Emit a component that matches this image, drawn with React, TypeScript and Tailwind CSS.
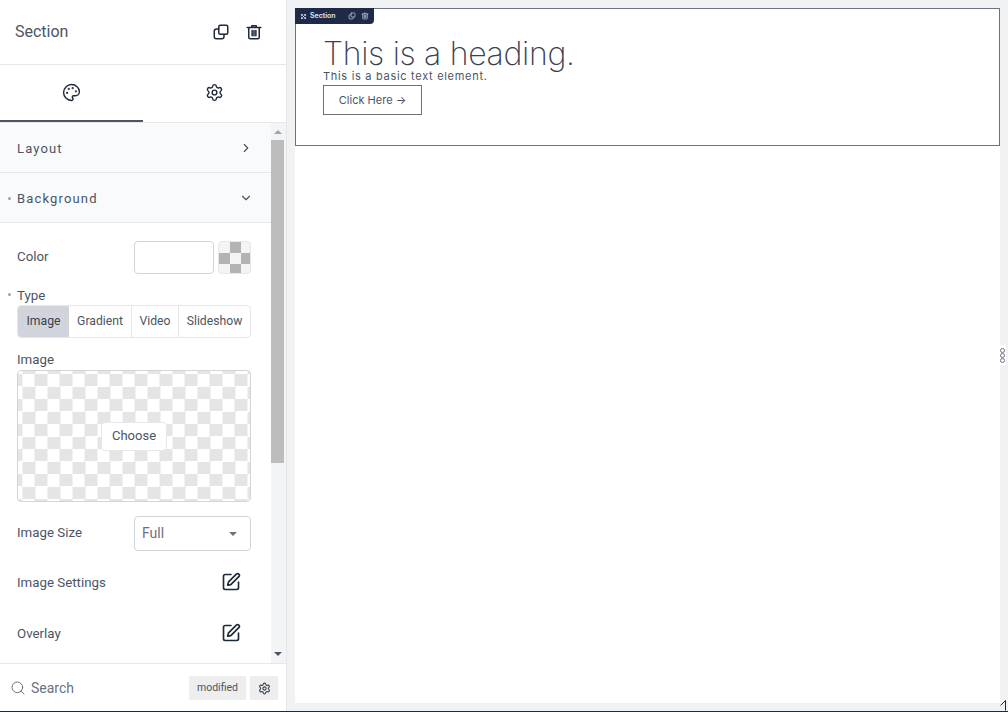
import React from 'react';
import { ChevronDown, ChevronRight, Move, Palette, Search, Settings, SquarePen } from 'lucide-react';

const panelFont = { fontFamily: 'Roboto, "Liberation Sans", sans-serif' };
const previewFont = { fontFamily: 'Inter, sans-serif' };

function CopyIcon({ className }: { className: string }) {
  return (
    <svg viewBox="0 0 24 24" fill="none" stroke="currentColor" strokeWidth="2" strokeLinecap="round" strokeLinejoin="round" className={className}>
      <rect x="9" y="3" width="12" height="12" rx="2" />
      <path d="M9 8H6a3 3 0 0 0-3 3v7a3 3 0 0 0 3 3h7a3 3 0 0 0 3-3v-3" />
    </svg>
  );
}

function TrashIcon({ className }: { className: string }) {
  return (
    <svg viewBox="0 0 24 24" fill="none" stroke="currentColor" strokeWidth="2" strokeLinecap="round" strokeLinejoin="round" className={className}>
      <path d="M3 6h18M9 5V3.5h6V5M5 6v13a2 2 0 0 0 2 2h10a2 2 0 0 0 2-2V6" />
      <path d="M9.5 10v7M12 10v7M14.5 10v7" />
    </svg>
  );
}

function AccordionRow({ label, open, dot }: { label: string; open?: boolean; dot?: boolean }) {
  return (
    <div className="relative h-[50px] flex items-center justify-between pl-[17px] pr-[18px] bg-[#f9fafb] border-b border-[#e5e7eb] text-[13px] tracking-[1.15px] text-[#4b5563]">
      {dot && <span className="absolute left-[8px] top-[24px] w-[3px] h-[3px] rounded-full bg-[#9ca3af]" />}
      <span className="pt-[2px]">{label}</span>
      {open ? <ChevronDown size={14} className="text-[#4b5563]" /> : <ChevronRight size={14} className="text-[#4b5563]" />}
    </div>
  );
}

function Sidebar() {
  return (
    <div style={panelFont} className="w-[287px] h-full shrink-0 flex flex-col bg-white border-r border-[#e5e7eb]">
      <div className="h-[65px] shrink-0 flex items-center justify-between pl-[15px] pr-[23px] border-b border-[#e5e7eb]">
        <span className="text-[16px] text-[#4b5563]">Section</span>
        <div className="flex items-center gap-[15px] text-[#1f2937]">
          <CopyIcon className="w-[18px] h-[18px]" />
          <TrashIcon className="w-[18px] h-[18px]" />
        </div>
      </div>
      <div className="h-[57px] shrink-0 flex">
        <div className="w-[143px] flex items-center justify-center border-b-2 border-[#4b5563] text-[#1f2937]">
          <Palette size={19} strokeWidth={1.8} />
        </div>
        <div className="flex-1 flex items-center justify-center pb-[2px] text-[#1f2937]">
          <Settings size={19} strokeWidth={1.8} />
        </div>
      </div>
      <div className="flex-1 min-h-0 flex border-t border-[#e5e7eb]">
        <div className="flex-1 min-w-0 overflow-hidden">
          <AccordionRow label="Layout" />
          <AccordionRow label="Background" open dot />
          <div className="pl-[17px] pr-[20px] text-[13.3px] text-[#4b5563]">
            <div className="mt-[18px] flex items-center justify-between">
              <span className="pb-[2px]">Color</span>
              <div className="flex gap-[4px]">
                <div className="w-[80px] h-[33px] rounded-[4px] border border-[#d1d5db] bg-white" />
                <div className="w-[33px] h-[33px] rounded-[4px] border border-[#e5e7eb] bg-[conic-gradient(#b3b3b3_25%,#f3f4f6_0_50%,#b3b3b3_0_75%,#f3f4f6_0)] bg-[length:22px_22px] bg-[position:0_0]" />
              </div>
            </div>
            <div className="relative mt-[13px] h-[18px] leading-[18px]">
              <span className="absolute left-[-9px] top-[6px] w-[3px] h-[3px] rounded-full bg-[#9ca3af]" />
              Type
            </div>
            <div className="h-[33px] flex rounded-[4px] border border-[#e5e7eb] overflow-hidden text-[12.2px] text-[#4b5563]">
              <div className="w-[51px] flex items-center justify-center bg-[#d1d5db] text-[#374151]">Image</div>
              <div className="w-[63px] flex items-center justify-center border-r border-[#e5e7eb]">Gradient</div>
              <div className="w-[47px] flex items-center justify-center border-r border-[#e5e7eb]">Video</div>
              <div className="flex-1 flex items-center justify-center">Slideshow</div>
            </div>
            <div className="mt-[13px] h-[18px] leading-[18px]">Image</div>
            <div className="mt-[1px] h-[132px] rounded-[4px] border border-[#d1d5db] flex items-center justify-center bg-[conic-gradient(#e5e5e5_25%,#ffffff_0_50%,#e5e5e5_0_75%,#ffffff_0)] bg-[length:25px_25px] bg-[position:4.5px_3px]">
              <div className="w-[66px] h-[29px] flex items-center justify-center rounded-[4px] border border-[#e5e7eb] bg-white text-[13px] text-[#4b5563]">Choose</div>
            </div>
            <div className="mt-[14px] flex items-center justify-between">
              <span className="pb-[2px]">Image Size</span>
              <div className="w-[117px] h-[35px] flex items-center justify-between pl-[7px] pr-[13px] rounded-[4px] border border-[#d1d5db] text-[14px] text-[#6b7280]">
                Full
                <span className="w-0 h-0 border-x-[4px] border-x-transparent border-t-[4px] border-t-[#6b7280]" />
              </div>
            </div>
            <div className="mt-[21px] h-[20px] flex items-center justify-between pr-[10px]">
              <span className="pt-[2px]">Image Settings</span>
              <SquarePen size={20} strokeWidth={2} className="text-[#1f2937]" />
            </div>
            <div className="mt-[31px] h-[20px] flex items-center justify-between pr-[10px]">
              <span className="pt-[2px]">Overlay</span>
              <SquarePen size={20} strokeWidth={2} className="text-[#1f2937]" />
            </div>
          </div>
        </div>
        <div className="w-[15px] shrink-0 flex flex-col items-start bg-[#f3f4f6]">
          <span className="mt-[7px] ml-[3px] w-0 h-0 border-x-[4px] border-x-transparent border-b-[4px] border-b-[#a3a3a3]" />
          <div className="mt-[6px] w-[13px] h-[323px] bg-[#bdbdbd]" />
          <span className="mt-auto mb-[7px] ml-[3px] w-0 h-0 border-x-[4px] border-x-transparent border-t-[4px] border-t-[#4b5563]" />
        </div>
      </div>
      <div className="h-[48px] shrink-0 flex items-center pl-[10px] pr-[8px] pt-px border-t border-[#e5e7eb] bg-white">
        <Search size={16} strokeWidth={1.5} className="text-[#6b7280]" />
        <span className="ml-[5px] text-[14px] text-[#6b7280]">Search</span>
        <div className="ml-auto w-[57px] h-[24px] flex items-center justify-center rounded-[2px] bg-[#eeeeee] text-[10.5px] text-[#4b5563]">modified</div>
        <div className="ml-[4px] w-[28px] h-[24px] flex items-center justify-center rounded-[2px] bg-[#eeeeee] text-[#374151]">
          <Settings size={13} />
        </div>
      </div>
    </div>
  );
}

function Preview() {
  return (
    <div className="flex-1 min-w-0 h-full p-[8px] bg-[#f1f2f3] relative">
      <div className="h-full bg-white">
        <div className="relative h-[138px] border border-[#6b7280] pl-[27px] pt-[28px]">
          <div className="absolute left-[-1px] top-[-1px] h-[16px] w-[79px] flex items-center pl-[5px] rounded-br-[4px] bg-[#1e2a47] text-white">
            <Move size={7} className="rotate-45" />
            <span style={previewFont} className="ml-[3px] text-[7px] font-semibold text-[#dbeafe]">Section</span>
            <CopyIcon className="ml-[12px] w-[8px] h-[8px] text-[#cbd5e1]" />
            <TrashIcon className="ml-[5px] w-[8px] h-[8px] text-[#cbd5e1]" />
          </div>
          <h1 style={previewFont} className="text-[32px] leading-[33px] tracking-[-0.3px] font-extralight text-[#374151]">This is a heading.</h1>
          <p style={previewFont} className="text-[11px] leading-[13px] tracking-[0.7px] text-[#4b5563]">This is a basic text element.</p>
          <div style={previewFont} className="mt-[2px] w-[99px] h-[30px] flex items-center justify-center border border-[#71717a] text-[11px] text-[#4b5563]">Click Here →</div>
        </div>
      </div>
      <div className="absolute right-[2px] top-[345px] w-[6px] h-[20px] flex flex-col items-start justify-center bg-white">
        <span className="w-[5px] h-[5px] rounded-full border-[1.5px] border-[#6b7280]" />
        <span className="w-[5px] h-[5px] rounded-full border-[1.5px] border-[#6b7280]" />
        <span className="w-[5px] h-[5px] rounded-full border-[1.5px] border-[#6b7280]" />
      </div>
      <svg viewBox="0 0 8 11" className="absolute right-0 bottom-0 w-[8px] h-[11px]" fill="none" stroke="#1f2937" strokeWidth="1">
        <path d="M0.5 5.5L5.5 0.5V10.5" />
      </svg>
    </div>
  );
}

export default function App() {
  return (
    <div className="w-[1008px] h-[712px] flex flex-col overflow-hidden bg-white">
      <div className="flex-1 min-h-0 flex">
        <Sidebar />
        <Preview />
      </div>
      <div className="h-px shrink-0 bg-[#1f2937]" />
    </div>
  );
}
